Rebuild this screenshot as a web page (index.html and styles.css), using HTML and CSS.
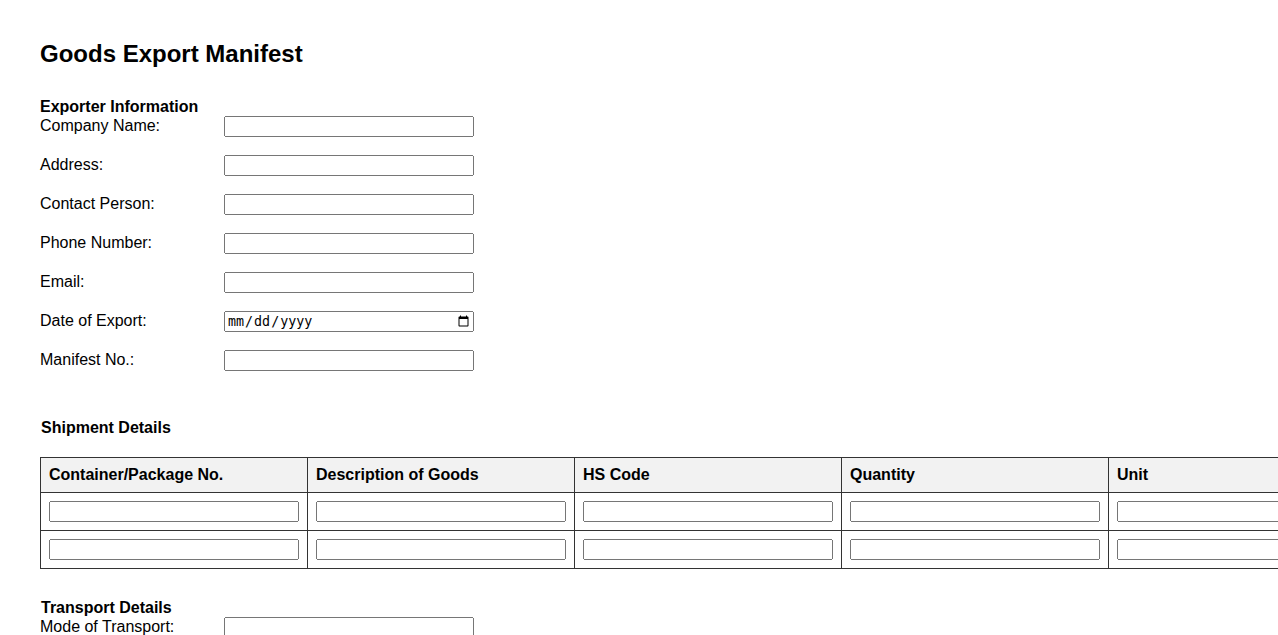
FILE: index.html
```html
<!DOCTYPE html>
<html lang="en">
<head>
  <meta charset="UTF-8">
  <meta name="viewport" content="width=device-width, initial-scale=1.0">
  <title>Goods Export Manifest</title>
  <link rel="stylesheet" href="styles.css">
</head>
<body>
  <h1>Goods Export Manifest</h1>

  <div class="section exporter">
    <div class="section-title">Exporter Information</div>
    <div class="field">
      <label for="company">Company Name:</label>
      <input type="text" id="company">
    </div>
    <div class="field">
      <label for="address">Address:</label>
      <input type="text" id="address">
    </div>
    <div class="field">
      <label for="contact">Contact Person:</label>
      <input type="text" id="contact">
    </div>
    <div class="field">
      <label for="phone">Phone Number:</label>
      <input type="text" id="phone">
    </div>
    <div class="field">
      <label for="email">Email:</label>
      <input type="email" id="email">
    </div>
    <div class="field">
      <label for="export-date">Date of Export:</label>
      <input type="date" id="export-date">
    </div>
    <div class="field">
      <label for="manifest-no">Manifest No.:</label>
      <input type="text" id="manifest-no">
    </div>
  </div>

  <div class="section shipment">
    <div class="section-title shipment-title">Shipment Details</div>
    <table class="goods-table">
      <thead>
        <tr>
          <th>Container/Package No.</th>
          <th>Description of Goods</th>
          <th>HS Code</th>
          <th>Quantity</th>
          <th>Unit</th>
        </tr>
      </thead>
      <tbody>
        <tr>
          <td><input type="text"></td>
          <td><input type="text"></td>
          <td><input type="text"></td>
          <td><input type="text"></td>
          <td><input type="text"></td>
        </tr>
        <tr>
          <td><input type="text"></td>
          <td><input type="text"></td>
          <td><input type="text"></td>
          <td><input type="text"></td>
          <td><input type="text"></td>
        </tr>
      </tbody>
    </table>
  </div>

  <div class="section transport">
    <div class="section-title">Transport Details</div>
    <div class="field">
      <label for="mode">Mode of Transport:</label>
      <input type="text" id="mode">
    </div>
  </div>
</body>
</html>
```

FILE: styles.css
```css
body {
  font-family: "Liberation Sans", Arial, sans-serif;
  font-size: 16px;
  color: #000;
  margin: 0;
  padding: 40px;
}

h1 {
  font-size: 24px;
  margin: 0 0 30px;
}

.section-title {
  font-weight: bold;
}

.exporter {
  margin-bottom: 48px;
}

.shipment-title {
  margin: 0 0 20px 1px;
}

.shipment {
  margin-bottom: 30px;
}

.transport .section-title {
  margin-left: 1px;
}

.field {
  display: flex;
  align-items: baseline;
  margin-bottom: 18px;
}

.field label {
  width: 184px;
  flex-shrink: 0;
}

input {
  width: 250px;
  height: 21px;
  box-sizing: border-box;
}

.goods-table {
  border-collapse: collapse;
}

.goods-table th,
.goods-table td {
  border: 1px solid #333;
  padding: 8px;
  text-align: left;
}

.goods-table th {
  background-color: #f2f2f2;
  white-space: nowrap;
}

.goods-table input {
  display: block;
}
```
